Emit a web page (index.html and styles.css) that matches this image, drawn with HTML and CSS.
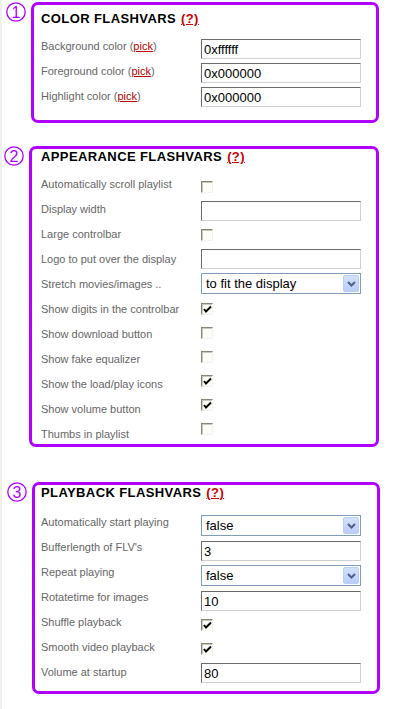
FILE: index.html
```html
<!DOCTYPE html>
<html lang="en">
<head>
<meta charset="utf-8">
<title>Flashvars</title>
<link rel="stylesheet" href="styles.css">
</head>
<body>
<div class="page">

  <section class="section section--color">
    <svg class="num" width="20" height="20" viewBox="0 0 20 20"><circle cx="10" cy="10" r="9.2"/><text x="10" y="15.6">1</text></svg>
    <div class="box box--color">
      <h2 class="box-title">COLOR FLASHVARS <a class="help" href="#">(?)</a></h2>
      <div class="fields">
        <div class="labels">
          <span class="label">Background color (<a class="pick" href="#">pick</a>)</span>
          <span class="label">Foreground color (<a class="pick" href="#">pick</a>)</span>
          <span class="label">Highlight color (<a class="pick" href="#">pick</a>)</span>
        </div>
        <div class="controls">
          <div class="ctl ctl--input"><input class="text" type="text" value="0xffffff"></div>
          <div class="ctl ctl--input"><input class="text" type="text" value="0x000000"></div>
          <div class="ctl ctl--input"><input class="text" type="text" value="0x000000"></div>
        </div>
      </div>
    </div>
  </section>

  <section class="section section--appearance">
    <svg class="num" width="20" height="20" viewBox="0 0 20 20"><circle cx="10" cy="10" r="9.2"/><text x="10" y="15.6">2</text></svg>
    <div class="box box--appearance">
      <h2 class="box-title">APPEARANCE FLASHVARS <a class="help" href="#">(?)</a></h2>
      <div class="fields">
        <div class="labels">
          <span class="label">Automatically scroll playlist</span>
          <span class="label">Display width</span>
          <span class="label">Large controlbar</span>
          <span class="label">Logo to put over the display</span>
          <span class="label">Stretch movies/images ..</span>
          <span class="label">Show digits in the controlbar</span>
          <span class="label">Show download button</span>
          <span class="label">Show fake equalizer</span>
          <span class="label">Show the load/play icons</span>
          <span class="label">Show volume button</span>
          <span class="label">Thumbs in playlist</span>
        </div>
        <div class="controls">
          <div class="ctl ctl--check"><span class="check"></span></div>
          <div class="ctl ctl--input"><input class="text" type="text" value=""></div>
          <div class="ctl ctl--check"><span class="check"></span></div>
          <div class="ctl ctl--input"><input class="text" type="text" value=""></div>
          <div class="ctl ctl--select"><div class="select"><span class="select-value">to fit the display</span><span class="select-btn"><svg width="9" height="6" viewBox="0 0 9 6"><polyline points="1,1 4.5,4.5 8,1"/></svg></span></div></div>
          <div class="ctl ctl--check"><span class="check"><svg width="11" height="11" viewBox="0 0 11 11"><polyline points="2,5 4,7.5 9,2.5"/></svg></span></div>
          <div class="ctl ctl--check"><span class="check"></span></div>
          <div class="ctl ctl--check"><span class="check"></span></div>
          <div class="ctl ctl--check"><span class="check"><svg width="11" height="11" viewBox="0 0 11 11"><polyline points="2,5 4,7.5 9,2.5"/></svg></span></div>
          <div class="ctl ctl--check"><span class="check"><svg width="11" height="11" viewBox="0 0 11 11"><polyline points="2,5 4,7.5 9,2.5"/></svg></span></div>
          <div class="ctl ctl--check"><span class="check"></span></div>
        </div>
      </div>
    </div>
  </section>

  <section class="section section--playback">
    <svg class="num" width="20" height="20" viewBox="0 0 20 20"><circle cx="10" cy="10" r="9.2"/><text x="10" y="15.6">3</text></svg>
    <div class="box box--playback">
      <h2 class="box-title">PLAYBACK FLASHVARS <a class="help" href="#">(?)</a></h2>
      <div class="fields">
        <div class="labels">
          <span class="label">Automatically start playing</span>
          <span class="label">Bufferlength of FLV's</span>
          <span class="label">Repeat playing</span>
          <span class="label">Rotatetime for images</span>
          <span class="label">Shuffle playback</span>
          <span class="label">Smooth video playback</span>
          <span class="label">Volume at startup</span>
        </div>
        <div class="controls">
          <div class="ctl ctl--select"><div class="select"><span class="select-value">false</span><span class="select-btn"><svg width="9" height="6" viewBox="0 0 9 6"><polyline points="1,1 4.5,4.5 8,1"/></svg></span></div></div>
          <div class="ctl ctl--input"><input class="text" type="text" value="3"></div>
          <div class="ctl ctl--select"><div class="select"><span class="select-value">false</span><span class="select-btn"><svg width="9" height="6" viewBox="0 0 9 6"><polyline points="1,1 4.5,4.5 8,1"/></svg></span></div></div>
          <div class="ctl ctl--input"><input class="text" type="text" value="10"></div>
          <div class="ctl ctl--check"><span class="check"><svg width="11" height="11" viewBox="0 0 11 11"><polyline points="2,5 4,7.5 9,2.5"/></svg></span></div>
          <div class="ctl ctl--check"><span class="check"><svg width="11" height="11" viewBox="0 0 11 11"><polyline points="2,5 4,7.5 9,2.5"/></svg></span></div>
          <div class="ctl ctl--input"><input class="text" type="text" value="80"></div>
        </div>
      </div>
    </div>
  </section>

</div>
</body>
</html>
```

FILE: styles.css
```css
html, body {
  margin: 0;
  padding: 0;
  background: #ffffff;
}

body {
  font-family: "Liberation Sans", Arial, sans-serif;
  font-size: 11px;
  color: #666666;
}

.page {
  border-left: 2px solid #efefef;
  padding: 2px 0 0 4px;
  min-height: 707px;
}

.section {
  display: flex;
  align-items: flex-start;
  gap: 5px;
}

.section--color {
  margin-bottom: 23px;
}

.section--appearance {
  margin-left: -2px;
  margin-bottom: 35px;
}

.section--playback {
  margin-left: 1px;
}

.num {
  flex: none;
  display: block;
}

.num circle {
  fill: none;
  stroke: #b000ff;
  stroke-width: 1.3;
}

.num text {
  fill: #b000ff;
  font-family: "Liberation Sans", Arial, sans-serif;
  font-size: 16px;
  text-anchor: middle;
}

.box {
  box-sizing: border-box;
  width: 348px;
  border: 3px solid #b000ff;
  border-radius: 7px;
  background: #ffffff;
}

.box--color {
  padding: 6px 0 9px 7px;
}

.box--appearance {
  width: 350px;
  padding: 0 0 1px 9px;
}

.box--playback {
  padding: 0 0 4px 6px;
}

.box-title {
  margin: 0 0 12px;
  font-family: "Liberation Sans", Arial, sans-serif;
  font-size: 13px;
  line-height: 16px;
  font-weight: bold;
  letter-spacing: 0.4px;
  color: #000000;
}

.box--playback .box-title {
  margin-bottom: 14px;
}

.help {
  color: #cc0000;
  text-decoration: underline;
  margin-left: 1px;
}

.fields {
  display: grid;
  grid-template-columns: 160px 160px;
  align-items: start;
}

.labels {
  display: flex;
  flex-direction: column;
  gap: 11px;
}

.label {
  display: block;
  line-height: 14px;
  color: #666666;
  white-space: nowrap;
}

.pick {
  color: #bb0000;
  text-decoration: underline;
}

.controls {
  display: flex;
  flex-direction: column;
}

.ctl {
  box-sizing: border-box;
}

.ctl--input {
  height: 24px;
}

.ctl--check {
  height: 24px;
  padding-top: 4px;
}

.ctl--select {
  height: 26px;
}

.text {
  display: block;
  box-sizing: border-box;
  width: 160px;
  height: 20px;
  margin: 0;
  padding: 0 2px;
  border: 1px solid;
  border-color: #6a6a6a #d0d0d0 #d0d0d0 #6a6a6a;
  background: #ffffff;
  font-family: "Liberation Sans", Arial, sans-serif;
  font-size: 13px;
  color: #000000;
  outline: none;
}

.check {
  display: flex;
  align-items: center;
  justify-content: center;
  box-sizing: border-box;
  width: 12px;
  height: 12px;
  border: 1px solid;
  border-color: #858574 #f2f2ea #f2f2ea #858574;
  box-shadow: inset 1px 1px 0 #c9c9bd;
  background: #fdfdf9;
}

.check svg {
  display: block;
  flex: none;
  margin: 1px 0 0 1px;
}

.check polyline {
  fill: none;
  stroke: #000000;
  stroke-width: 2;
}

.select {
  display: flex;
  align-items: center;
  justify-content: space-between;
  box-sizing: border-box;
  width: 160px;
  height: 21px;
  border: 1px solid #7f9db9;
  background: #ffffff;
  padding: 0 1px 0 4px;
}

.select-value {
  font-family: "Liberation Sans", Arial, sans-serif;
  font-size: 13px;
  color: #000000;
  line-height: 19px;
}

.select-btn {
  display: flex;
  align-items: center;
  justify-content: center;
  box-sizing: border-box;
  width: 16px;
  height: 17px;
  border: 1px solid #b9cdf5;
  border-radius: 2px;
  background: linear-gradient(#d4e1fc, #b8cdfa);
}

.select-btn svg {
  display: block;
}

.select-btn polyline {
  fill: none;
  stroke: #4d6185;
  stroke-width: 2;
}
```
